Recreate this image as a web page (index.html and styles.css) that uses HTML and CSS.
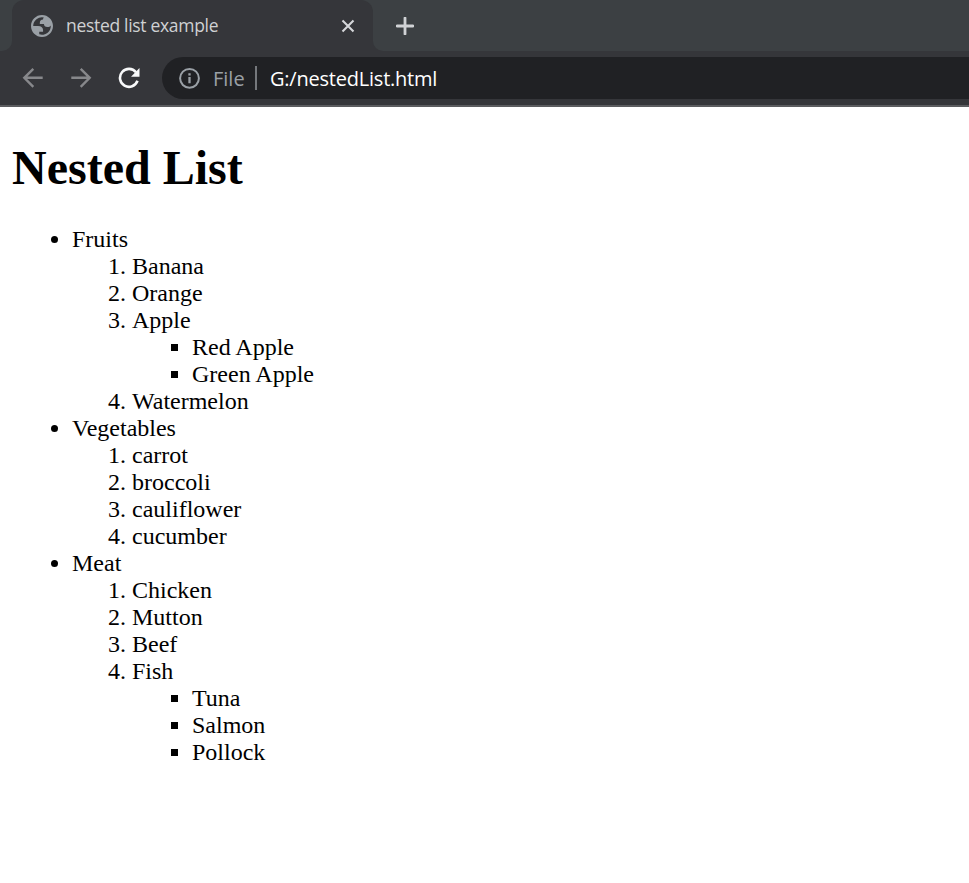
FILE: index.html
```html
<!DOCTYPE html>
<html lang="en">
<head>
<meta charset="utf-8">
<title>nested list example</title>
<link rel="stylesheet" href="styles.css">
</head>
<body>
<header class="browser">
  <div class="tabstrip">
    <div class="strip-start"></div>
    <div class="tab">
      <svg class="globe" width="22" height="22" viewBox="2 2 20 20"><path fill="#9aa0a6" fill-rule="evenodd" d="M12 2C6.480 2 2 6.480 2 12s4.480 10 10 10 10-4.480 10-10S17.520 2 12 2zM4 12h4.400c3.407.022 4.922 1.730 4.543 5.127H9.488v2.470a8.004 8.004 0 0 0 10.498-8.083C19.327 12.504 18.332 13 17 13c-2.137 0-3.206-.916-3.206-2.750h-3.748c-.274-2.728.683-4.092 2.870-4.092 0-.975.327-1.597.811-1.970A8.004 8.004 0 0 0 4 12z"/></svg>
      <span class="tab-title">nested list example</span>
      <svg class="close" width="14" height="14" viewBox="0 0 14 14"><path d="M1.500 1.500L12.500 12.500M12.500 1.500L1.500 12.500" stroke="#d5d7da" stroke-width="2.100" fill="none"/></svg>
    </div>
    <div class="strip-rest">
      <svg width="18" height="18" viewBox="0 0 18 18"><path d="M9 1V17M1 9H17" stroke="#d0d2d5" stroke-width="2.800" stroke-linecap="round" fill="none"/></svg>
    </div>
  </div>
  <div class="toolbar">
    <svg width="22" height="22" viewBox="0 0 22 22"><path d="M20.700 10.800H3M11.300 1.800L2.300 10.800L11.300 19.800" stroke="#87888b" stroke-width="2.400" fill="none"/></svg>
    <svg width="22" height="22" viewBox="0 0 22 22"><path d="M1.300 10.800H19M10.700 1.800L19.700 10.800L10.700 19.800" stroke="#87888b" stroke-width="2.400" fill="none"/></svg>
    <svg width="22" height="22" viewBox="0 0 22 22"><path d="M18 5.200A9 9 0 1 0 19.500 13.800" stroke="#f8f9fa" stroke-width="2.600" fill="none"/><path d="M21.500 1V9.800H13Z" fill="#f8f9fa"/></svg>
    <div class="address">
      <svg width="22" height="22" viewBox="0 0 22 22"><circle cx="11.500" cy="11.300" r="9.400" stroke="#9aa0a6" stroke-width="2" fill="none"/><path d="M11.500 10V16.200M11.500 6.200V8.400" stroke="#9aa0a6" stroke-width="2.300"/></svg>
      <span class="scheme">File</span>
      <span class="divider"></span>
      <span class="url">G:/nestedList.html</span>
    </div>
  </div>
</header>
<main>
  <h1>Nested List</h1>
  <ul>
    <li>Fruits
      <ol>
        <li>Banana</li>
        <li>Orange</li>
        <li>Apple
          <ul class="square">
            <li>Red Apple</li>
            <li>Green Apple</li>
          </ul>
        </li>
        <li>Watermelon</li>
      </ol>
    </li>
    <li>Vegetables
      <ol>
        <li>carrot</li>
        <li>broccoli</li>
        <li>cauliflower</li>
        <li>cucumber</li>
      </ol>
    </li>
    <li>Meat
      <ol>
        <li>Chicken</li>
        <li>Mutton</li>
        <li>Beef</li>
        <li>Fish
          <ul class="square">
            <li>Tuna</li>
            <li>Salmon</li>
            <li>Pollock</li>
          </ul>
        </li>
      </ol>
    </li>
  </ul>
</main>
</body>
</html>
```
FILE: styles.css
```css
* { box-sizing: border-box; }
body {
  margin: 0;
  min-height: 883px;
  background: #fff;
  color: #000;
  font: 24px/27px "Liberation Serif", "Times New Roman", serif;
}
svg { display: block; flex: none; }
.browser {
  height: 107px;
  background: #35363a;
  border-bottom: 2px solid #5b5c5f;
  font-family: "Open Sans", "Noto Sans", sans-serif;
  white-space: nowrap;
}
.tabstrip {
  display: flex;
  height: 51px;
  background: linear-gradient(#3c4043 50%, #35363a 50%);
}
.strip-start { width: 12px; background: #3c4043; border-bottom-right-radius: 10px; }
.tab {
  display: flex;
  align-items: center;
  width: 361px;
  padding: 0 18px 0 19px;
  background: #35363a;
  border-radius: 12px 12px 0 0;
}
.tab-title { margin-left: 13px; font-size: 17.500px; letter-spacing: -.31px; color: #cfd1d3; }
.close { margin-left: auto; }
.strip-rest {
  display: flex;
  flex: 1;
  align-items: center;
  padding-left: 23px;
  background: #3c4043;
  border-bottom-left-radius: 10px;
}
.toolbar { display: flex; align-items: center; gap: 26px; height: 54px; padding-left: 22px; }
.address {
  display: flex;
  flex: 1;
  align-items: center;
  height: 42px;
  margin-left: -4px;
  padding-left: 16px;
  border-radius: 21px 0 0 21px;
  background: #202124;
  font-size: 20px;
}
.scheme { width: 42px; margin-left: 13px; color: #9aa0a6; }
.divider { width: 2px; height: 24px; background: #75787c; }
.url { margin-left: 13px; letter-spacing: -.22px; color: #fff; }
main { padding: 33px 12px 0; }
h1 { margin: 0 0 31px; font-size: 48px; line-height: 55px; }
ul, ol { margin: 0; padding-left: 60px; }
.square { list-style-type: square; }
```
